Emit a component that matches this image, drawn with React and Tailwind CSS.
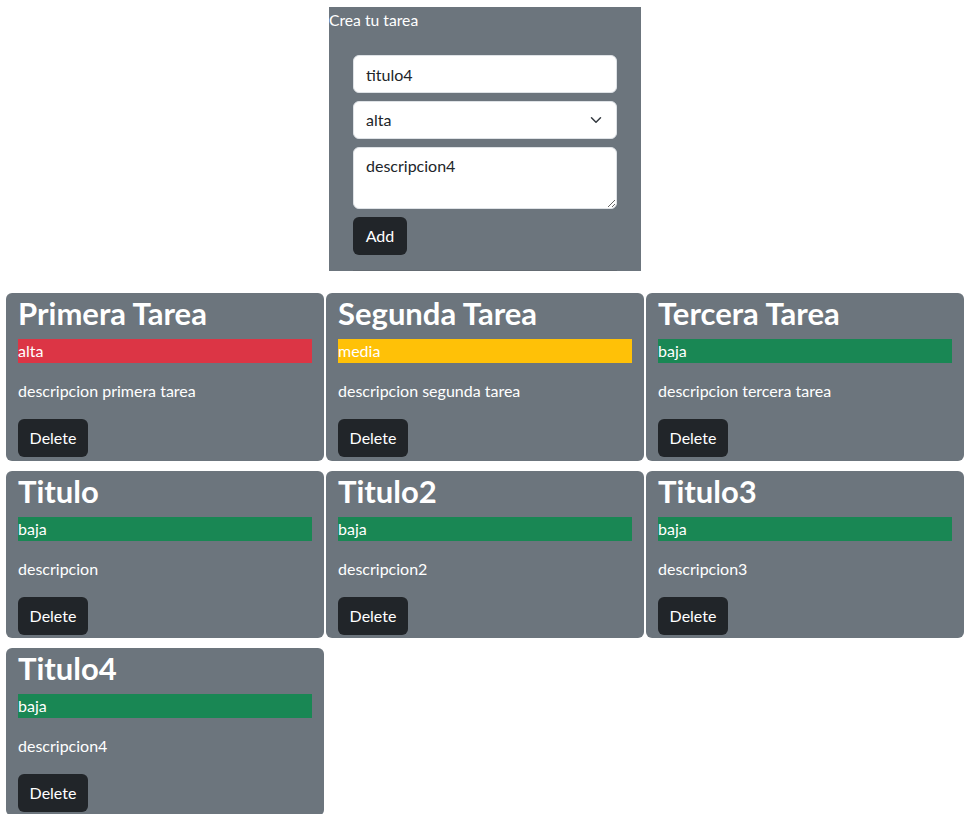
import React from "react";

const tasks = [
  { t: "Primera Tarea", p: "alta", d: "descripcion primera tarea" },
  { t: "Segunda Tarea", p: "media", d: "descripcion segunda tarea" },
  { t: "Tercera Tarea", p: "baja", d: "descripcion tercera tarea" },
  { t: "Titulo", p: "baja", d: "descripcion" },
  { t: "Titulo2", p: "baja", d: "descripcion2" },
  { t: "Titulo3", p: "baja", d: "descripcion3" },
  { t: "Titulo4", p: "baja", d: "descripcion4" },
];

function badgeClass(p) {
  if (p === "alta") return "bg-[#dc3545]";
  if (p === "media") return "bg-[#ffc107]";
  return "bg-[#198754]";
}

function Card({ t, p, d }) {
  return (
    <div className="bg-[#6c757d] rounded-md px-3 pt-[2px] pb-1 h-[167.5px] text-white">
      <h2 className="text-[31px] leading-[36px] font-bold mb-2">{t}</h2>
      <div className={`${badgeClass(p)} h-6 leading-6 text-[16px] mb-4`}>{p}</div>
      <p className="h-6 leading-6 text-[16px] mb-4">{d}</p>
      <button className="bg-[#212529] rounded-md h-[38px] w-[70px] text-[16px] text-white">
        Delete
      </button>
    </div>
  );
}

export default function App() {
  return (
    <div
      className="bg-white min-h-[814px] text-[#212529]"
      style={{ fontFamily: 'Lato, "Open Sans", sans-serif' }}
    >
      <div className="pt-[7px] flex justify-center">
        <div className="w-[312px] bg-[#6c757d] ml-[1px]">
          <div className="h-6 leading-6 text-[15.7px] text-white pt-[1px]">Crea tu tarea</div>
          <div className="px-6 pt-6 pb-[15px] flex flex-col gap-2">
            <input
              readOnly
              value="titulo4"
              className="h-[38px] w-full bg-white border border-[#dee2e6] rounded-md px-3 text-[16px] text-[#212529] outline-none"
            />
            <div className="h-[38px] w-full bg-white border border-[#dee2e6] rounded-md pl-3 pr-3 flex items-center justify-between text-[16px] text-[#212529]">
              <span>alta</span>
              <svg width="16" height="12" viewBox="0 0 16 16">
                <path d="m2 5 6 6 6-6" fill="none" stroke="#343a40" strokeWidth="2" strokeLinecap="round" strokeLinejoin="round" />
              </svg>
            </div>
            <textarea
              readOnly
              value="descripcion4"
              className="h-[62px] w-full bg-white border border-[#dee2e6] rounded-md px-3 py-[6px] text-[16px] text-[#212529] outline-none resize-y"
            />
            <div>
              <button className="bg-[#212529] rounded-md h-[38px] w-[54px] text-[16px] text-white">Add</button>
            </div>
          </div>
          <div className="mx-6 h-px bg-[#646b72]"></div>
        </div>
      </div>
      <div className="mt-[22px] pl-[6px] grid grid-cols-[repeat(3,318px)] gap-x-[2px] gap-y-[10px]">
        {tasks.map((x, i) => (
          <Card key={i} {...x} />
        ))}
      </div>
    </div>
  );
}
